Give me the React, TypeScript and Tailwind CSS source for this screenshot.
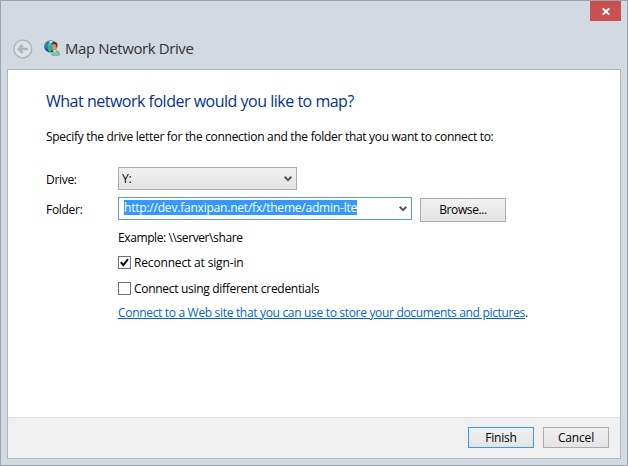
import React from "react";

function BackButton() {
  return (
    <svg width="20" height="20" viewBox="0 0 20 20" className="mt-px shrink-0">
      <circle cx="9.8" cy="10" r="8.9" fill="#dfe2e6" stroke="#b2b5b9" strokeWidth="1.5" />
      <path d="M15 10H6.2M9.8 6L5.8 10l4 4" fill="none" stroke="#b2b5b9" strokeWidth="2.5" />
    </svg>
  );
}

function NetworkIcon() {
  return (
    <svg width="16" height="16" viewBox="0 0 16 16" className="shrink-0">
      <defs>
        <radialGradient id="globe" cx="0.4" cy="0.3" r="0.75">
          <stop offset="0" stopColor="#62c8f5" />
          <stop offset="0.5" stopColor="#1a6fd0" />
          <stop offset="1" stopColor="#0c3590" />
        </radialGradient>
      </defs>
      <circle cx="6.4" cy="6.4" r="6.2" fill="url(#globe)" />
      <path d="M1.2 3.8L3.5 1.2 5 1.5 4.6 4 3 6.2 1.3 6z" fill="#3c8f4a" />
      <path d="M4 6.5l3 .3 1 2.2-1.6 3.3L4.6 11z" fill="#36c548" />
      <path d="M5.5 .8l3.5 .4-1 2-2.2-.4z" fill="#b9eefa" />
      <path d="M7.6 15.2c-.1-2.8 1-4 3-4.3l2.2-.2c2 .6 3 2 3 4.3-2.8.9-5.4.9-8.2.2z" fill="#7fc3a0" stroke="#5c9d7f" strokeWidth=".5" />
      <path d="M8.4 9.4l3.6 1.2-1 2.4z" fill="#f2ddc6" />
      <ellipse cx="10.4" cy="6.6" rx="2.7" ry="3.7" fill="#c99468" />
      <path d="M7.4 4.4C7.6 2.5 9 1.6 11 1.9c2.3.2 3 2.2 2.4 4.6l-.9 1.6-.6-3.4-2.4-.6z" fill="#533a2a" />
    </svg>
  );
}

function Chevron() {
  return (
    <svg width="8" height="6" viewBox="0 0 8 6" className="shrink-0">
      <path d="M.7 .8L4 4.1 7.3 .8" fill="none" stroke="#555" strokeWidth="2" />
    </svg>
  );
}

function Checkbox({ checked, label, labelClass }: { checked: boolean; label: string; labelClass: string }) {
  return (
    <div className="flex h-[13px] items-center gap-[3px]">
      <span className="flex size-[13px] shrink-0 items-center justify-center border border-[#707070] bg-white">
        {checked && (
          <svg width="9" height="9" viewBox="0 0 9 9">
            <path d="M.8 4.2L3.3 7.2 8 1.2" fill="none" stroke="#111" strokeWidth="2" />
          </svg>
        )}
      </span>
      <span className={labelClass}>{label}</span>
    </div>
  );
}

const face = "flex items-center justify-center border bg-linear-to-b from-[#f0f0f0] to-[#e4e4e4]";

export default function App() {
  return (
    <div className="flex h-[466px] w-[628px] flex-col overflow-hidden whitespace-nowrap border border-[#9ea4ab] bg-[#d3d9e1] px-[6px] pb-[6px] font-['Open_Sans',sans-serif] text-[12px] leading-[16px] tracking-[-0.3px] text-black">
      <div className="flex h-[20px] shrink-0 justify-end">
        <button className="flex h-[20px] w-[31px] items-center justify-center bg-[#c75050]">
          <svg width="8" height="7" viewBox="0 0 8 7">
            <path d="M.7 .3L7.3 6.7M7.3 .3L.7 6.7" stroke="#fff" strokeWidth="1.9" />
          </svg>
        </button>
      </div>
      <div className="flex h-[48px] shrink-0 items-center pl-[6px] pt-[6px]">
        <BackButton />
        <span className="w-[11px]" />
        <NetworkIcon />
        <span className="ml-[5px] text-[15px] leading-[20px] tracking-[-0.4px] text-[#333]">Map Network Drive</span>
      </div>
      <div className="flex h-[390px] shrink-0 flex-col border border-[#b0b6be] bg-white">
        <main className="flex h-[347px] flex-col pl-[38px] pt-[20px]">
          <h1 className="h-[22px] text-[16px] leading-[22px] tracking-[-0.49px] text-[#003399]">
            What network folder would you like to map?
          </h1>
          <p className="mt-[17px] h-[16px]">
            Specify the drive letter for the connection and the folder that you want to connect to:
          </p>
          <div className="mt-[22px] flex h-[23px] items-center">
            <span className="w-[72px] pt-[2px]">Drive:</span>
            <div className={face + " h-[23px] w-[179px] border-[#acacac]"}>
              <span className="grow pl-[3px]">Y:</span>
              <span className="pr-[4px]"><Chevron /></span>
            </div>
          </div>
          <div className="mt-[7px] flex h-[25px] items-start">
            <span className="w-[72px] pt-[5px]">Folder:</span>
            <div className="flex h-[23px] w-[294px] items-center justify-between border border-[#569de5] pl-[5px] pr-[4px]">
              <span className="-mt-[2px] h-[15px] bg-[#3399ff] leading-[15px] tracking-[-0.21px] text-white">http://dev.fanxipan.net/fx/theme/admin-lte</span>
              <Chevron />
            </div>
            <button className={face + " ml-[8px] mt-[1px] h-[24px] w-[86px] border-[#acacac] tracking-[-0.4px]"}>Browse...</button>
          </div>
          <div className="flex flex-col pl-[72px]">
            <p className="mt-[8px] h-[16px] tracking-[-0.4px]">Example: \\server\share</p>
            <div className="mt-[10px]"><Checkbox checked label="Reconnect at sign-in" labelClass="tracking-[-0.16px]" /></div>
            <div className="mt-[13px]"><Checkbox checked={false} label="Connect using different credentials" labelClass="tracking-[-0.3px]" /></div>
            <p className="mt-[10px] h-[16px] tracking-[-0.32px]">
              <a className="text-[#0066cc] underline">Connect to a Web site that you can use to store your documents and pictures</a>.
            </p>
          </div>
        </main>
        <footer className="flex h-[41px] items-start justify-end gap-[9px] border-t border-[#dfdfdf] bg-[#f0f0f0] pr-[11px] pt-[9px]">
          <button className={face + " h-[21px] w-[66px] border-[#3399ff] tracking-[-0.2px]"}>Finish</button>
          <button className={face + " h-[21px] w-[66px] border-[#acacac] tracking-[-0.15px]"}>Cancel</button>
        </footer>
      </div>
    </div>
  );
}
